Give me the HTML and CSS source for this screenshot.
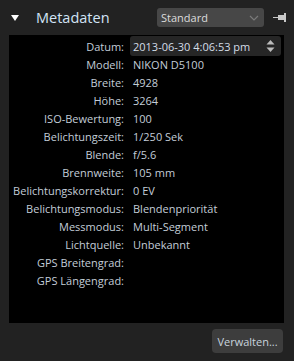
FILE: index.html
```html
<!DOCTYPE html>
<html lang="de">
<head>
  <meta charset="UTF-8">
  <meta name="viewport" content="width=device-width, initial-scale=1.0">
  <title>Metadaten</title>
  <link rel="stylesheet" href="styles.css">
</head>
<body>

  <div class="panel">
    <div class="panel-header">
      <span class="toggle"></span>
      <h2 class="title">Metadaten</h2>
      <div class="preset-select">
        <span>Standard</span>
        <svg class="chevron" width="10" height="6" viewBox="0 0 10 6">
          <path d="M1 1 L5 5 L9 1" fill="none" stroke="#7a7a7a" stroke-width="1.2"/>
        </svg>
      </div>
      <svg class="pin" width="13" height="9" viewBox="0 0 13 9">
        <rect x="0" y="4" width="5" height="1" fill="#c8c8c8"/>
        <rect x="5" y="2" width="6" height="5" fill="#c8c8c8"/>
        <rect x="11" y="0" width="2" height="9" fill="#c8c8c8"/>
      </svg>
    </div>

    <div class="meta-box">
      <div class="meta-grid">
        <span class="label">Datum:</span>
        <div class="date-input">
          <span>2013-06-30 4:06:53 pm</span>
          <svg class="spinner" width="9" height="14" viewBox="0 0 9 14">
            <path d="M0.5 5.5 L4.5 1 L8.5 5.5 Z" fill="#bcbcbc"/>
            <path d="M0.5 8.5 L4.5 13 L8.5 8.5 Z" fill="#bcbcbc"/>
          </svg>
        </div>

        <span class="label">Modell:</span><span class="value">NIKON D5100</span>
        <span class="label">Breite:</span><span class="value">4928</span>
        <span class="label">Höhe:</span><span class="value">3264</span>
        <span class="label">ISO-Bewertung:</span><span class="value">100</span>
        <span class="label">Belichtungszeit:</span><span class="value">1/250 Sek</span>
        <span class="label">Blende:</span><span class="value">f/5.6</span>
        <span class="label">Brennweite:</span><span class="value">105 mm</span>
        <span class="label">Belichtungskorrektur:</span><span class="value">0 EV</span>
        <span class="label">Belichtungsmodus:</span><span class="value">Blendenpriorität</span>
        <span class="label">Messmodus:</span><span class="value">Multi-Segment</span>
        <span class="label">Lichtquelle:</span><span class="value">Unbekannt</span>
        <span class="label">GPS Breitengrad:</span><span class="value"></span>
        <span class="label">GPS Längengrad:</span><span class="value"></span>
      </div>
    </div>

    <div class="panel-footer">
      <button class="manage-button">Verwalten...</button>
    </div>
  </div>

</body>
</html>
```

FILE: styles.css
```css
body {
  margin: 0;
  background-color: #222222;
  font-family: "Open Sans", "Noto Sans", sans-serif;
  color: #c3cdd8;
}

.panel {
  width: 294px;
  height: 361px;
}

.panel-header {
  display: flex;
  align-items: center;
  height: 35px;
  padding-left: 11px;
  box-sizing: border-box;
}

.toggle {
  width: 0;
  height: 0;
  border-left: 4px solid transparent;
  border-right: 4px solid transparent;
  border-top: 6px solid #ffffff;
}

.title {
  margin: 0 0 0 17px;
  font-size: 14.5px;
  font-weight: normal;
  color: #d2e4f6;
  flex: 1;
}

.preset-select {
  display: flex;
  align-items: center;
  justify-content: space-between;
  width: 107px;
  height: 19px;
  box-sizing: border-box;
  padding: 0 5px 0 4px;
  background: #474747;
  border-radius: 3px;
  font-size: 11px;
  color: #dcdcdc;
}

.pin {
  margin: 0 8px 0 9px;
}

.meta-box {
  margin: 0 10px 0 9px;
  height: 288px;
  background: #000000;
  padding-top: 2px;
  box-sizing: border-box;
}

.meta-grid {
  display: grid;
  grid-template-columns: 115px 1fr;
  grid-auto-rows: 18px;
  column-gap: 9px;
  align-items: center;
  font-size: 11px;
}

.label {
  text-align: right;
  white-space: nowrap;
}

.value {
  white-space: nowrap;
}

.date-input {
  display: flex;
  align-items: center;
  justify-content: space-between;
  height: 20px;
  margin-left: -3px;
  margin-right: 3px;
  padding: 0 6px 0 3px;
  background: #262626;
  border-radius: 3px;
  color: #d4dde6;
}

.panel-footer {
  display: flex;
  justify-content: flex-end;
  padding: 6px 11px 0 0;
}

.manage-button {
  height: 24px;
  width: 71px;
  padding: 0;
  border: none;
  border-radius: 4px;
  background: #3d3d3d;
  color: #c8d3de;
  font-family: "Open Sans", "Noto Sans", sans-serif;
  font-size: 11px;
}
```
